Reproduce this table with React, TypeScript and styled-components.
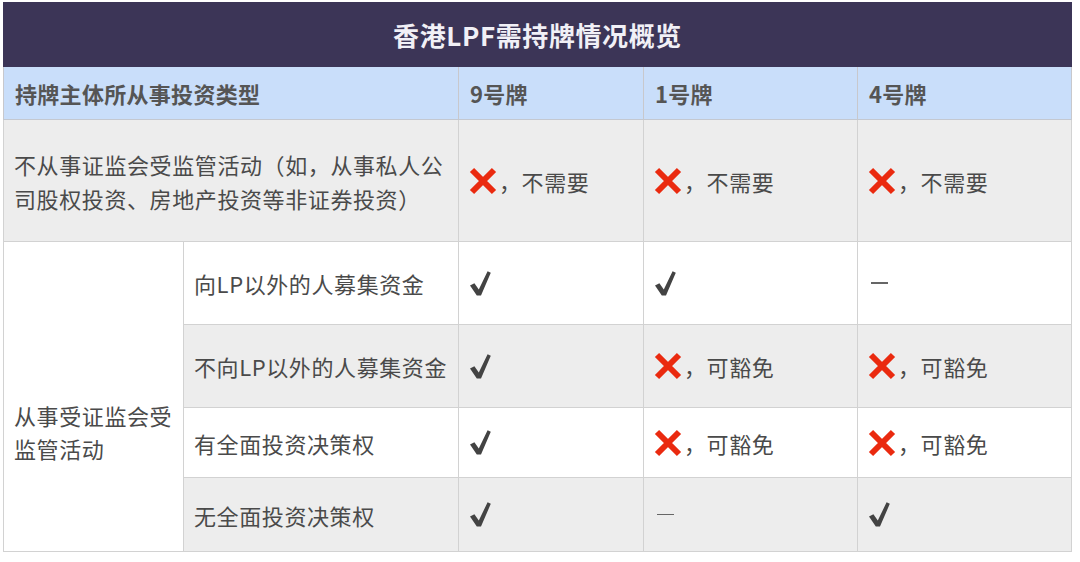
import styled, { createGlobalStyle } from "styled-components";

const GlobalStyle = createGlobalStyle`
  html, body {
    margin: 0;
    padding: 0;
    background: #ffffff;
  }
  body {
    font-family: "Noto Sans CJK SC", "Noto Sans", sans-serif;
  }
`;

type Mark = "yes" | "no" | "none";

interface SubRow {
  label: string;
  height: number;
  shade: boolean;
  cells: { mark: Mark; note?: string }[];
}

const subRows: SubRow[] = [
  {
    label: "向LP以外的人募集资金",
    height: 83,
    shade: false,
    cells: [{ mark: "yes" }, { mark: "yes" }, { mark: "none" }],
  },
  {
    label: "不向LP以外的人募集资金",
    height: 83,
    shade: true,
    cells: [{ mark: "yes" }, { mark: "no", note: "，可豁免" }, { mark: "no", note: "，可豁免" }],
  },
  {
    label: "有全面投资决策权",
    height: 70,
    shade: false,
    cells: [{ mark: "yes" }, { mark: "no", note: "，可豁免" }, { mark: "no", note: "，可豁免" }],
  },
  {
    label: "无全面投资决策权",
    height: 74,
    shade: true,
    cells: [{ mark: "yes" }, { mark: "none" }, { mark: "yes" }],
  },
];

const CrossIcon = () => (
  <svg width="28" height="28" viewBox="0 0 28 28">
    <path d="M3 3 L25 25 M25 3 L3 25" stroke="#ea2a0f" strokeWidth="6" fill="none" />
  </svg>
);

const CheckIcon = () => (
  <svg width="23" height="27" viewBox="0 0 23 27">
    <polygon points="1,15.6 5.4,13.2 9.8,19.6 18.6,1.2 21.8,2.8 12,25.6 7.8,25.6" fill="#434343" />
  </svg>
);

const MarkCell = ({ mark, note }: { mark: Mark; note?: string }) => {
  if (mark === "yes") {
    return (
      <MarkWrap>
        <CheckIcon />
      </MarkWrap>
    );
  }
  if (mark === "none") {
    return (
      <MarkWrap>
        <Dash />
      </MarkWrap>
    );
  }
  return (
    <MarkWrap>
      <CrossIcon />
      <Note>{note}</Note>
    </MarkWrap>
  );
};

const App = () => {
  return (
    <Page>
      <GlobalStyle />
      <Table>
        <colgroup>
          <col style={{ width: 180 }} />
          <col style={{ width: 275 }} />
          <col style={{ width: 185 }} />
          <col style={{ width: 214 }} />
          <col style={{ width: 214 }} />
        </colgroup>
        <tbody>
          <tr>
            <TitleCell colSpan={5}>香港LPF需持牌情况概览</TitleCell>
          </tr>
          <HeadRow>
            <HeadCell colSpan={2}>持牌主体所从事投资类型</HeadCell>
            <HeadCell>9号牌</HeadCell>
            <HeadCell>1号牌</HeadCell>
            <HeadCell>4号牌</HeadCell>
          </HeadRow>
          <BodyRow $height={122} $shade>
            <Cell colSpan={2}>
              不从事证监会受监管活动（如，从事私人公
              <br />
              司股权投资、房地产投资等非证券投资）
            </Cell>
            <Cell>
              <MarkCell mark="no" note="，不需要" />
            </Cell>
            <Cell>
              <MarkCell mark="no" note="，不需要" />
            </Cell>
            <Cell>
              <MarkCell mark="no" note="，不需要" />
            </Cell>
          </BodyRow>
          {subRows.map((row, i) => (
            <BodyRow key={row.label} $height={row.height} $shade={row.shade}>
              {i === 0 && (
                <GroupCell rowSpan={subRows.length}>
                  从事受证监会受
                  <br />
                  监管活动
                </GroupCell>
              )}
              <Cell>{row.label}</Cell>
              {row.cells.map((c, j) => (
                <Cell key={j}>
                  <MarkCell mark={c.mark} note={c.note} />
                </Cell>
              ))}
            </BodyRow>
          ))}
        </tbody>
      </Table>
    </Page>
  );
};

const Page = styled.div`
  width: 1080px;
  height: 562px;
  padding: 2px 0 0 3px;
  box-sizing: border-box;
`;

const Table = styled.table`
  width: 1069px;
  table-layout: fixed;
  border-collapse: collapse;
  border: 1px solid #d2d2d2;
`;

const TitleCell = styled.th`
  height: 63px;
  padding: 0;
  background: #3c3557;
  color: #f1f0f6;
  font-size: 26px;
  font-weight: 700;
  text-align: center;
  vertical-align: middle;
  letter-spacing: 0.6px;
  border: 1px solid #3c3557;
`;

const HeadRow = styled.tr`
  height: 53px;
  background: #c9defa;
`;

const HeadCell = styled.th`
  padding: 0 11px;
  color: #555555;
  font-size: 22px;
  font-weight: 700;
  text-align: left;
  letter-spacing: 0.3px;
  border: 1px solid #c8c8cc;
  border-bottom-color: #c4c8d0;
`;

const BodyRow = styled.tr<{ $height: number; $shade?: boolean }>`
  height: ${(p) => p.$height}px;
  background: ${(p) => (p.$shade ? "#ededed" : "#ffffff")};
`;

const Cell = styled.td`
  padding: 0 10px;
  color: #4a4a4a;
  font-size: 22px;
  line-height: 34px;
  letter-spacing: 0.6px;
  vertical-align: middle;
  border: 1px solid #d2d2d2;
`;

const GroupCell = styled(Cell)`
  background: #ffffff;
  vertical-align: top;
  padding-top: 157px;
  line-height: 33px;
`;

const MarkWrap = styled.div`
  display: flex;
  align-items: center;
  height: 34px;
`;

const Note = styled.span`
  margin-left: 2px;
  color: #4a4a4a;
`;

const Dash = styled.span`
  display: block;
  width: 17px;
  height: 1.5px;
  margin-left: 3px;
  background: #666666;
`;

export default App;
